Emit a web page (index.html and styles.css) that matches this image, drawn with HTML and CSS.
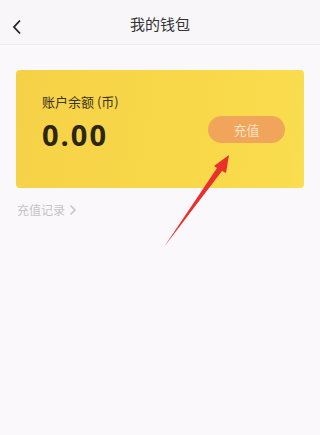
FILE: index.html
```html
<!DOCTYPE html>
<html lang="zh">
<head>
<meta charset="utf-8">
<link rel="stylesheet" href="styles.css">
</head>
<body>
<div class="page">
  <header class="topbar">
    <svg class="back" width="12" height="16" viewBox="0 0 12 16"><path d="M9 1.5 L3 8 L9 14.5" fill="none" stroke="#222" stroke-width="1.8"/></svg>
    <div class="title">我的钱包</div>
  </header>
  <main class="content">
    <section class="card">
      <div class="info">
        <div class="label">账户余额 (币)</div>
        <div class="amount">0.00</div>
      </div>
      <button class="recharge">充值</button>
    </section>
    <div class="records">充值记录 <svg class="chev" width="8" height="12" viewBox="0 0 8 12"><path d="M1.5 1.5 L6 6 L1.5 10.5" fill="none" stroke="#c4c4c4" stroke-width="1.5"/></svg></div>
  </main>
  <svg class="arrow" width="320" height="435" viewBox="0 0 320 435">
    <path d="M164 247 L217 168 L214 166 L229 155 L226 173 L222 171 Z" fill="#e8312c"/>
  </svg>
</div>
</body>
</html>
```
FILE: styles.css
```css
* { box-sizing: border-box; }
html, body { margin: 0; padding: 0; }
body {
  background: #faf8fb;
  font-family: "Noto Sans CJK SC", "Noto Sans", sans-serif;
  width: 320px;
  height: 435px;
  overflow: hidden;
}
.page { position: relative; width: 320px; height: 435px; }
.topbar {
  height: 45px;
  border-bottom: 1px solid #efedf0;
  display: flex;
  align-items: center;
  justify-content: center;
  position: relative;
  background: #f8f6f9;
}
.back { position: absolute; left: 11px; top: 19px; }
.title { font-size: 15px; color: #333; margin-top: 2px; }
.content { padding: 25px 16px 0; }
.card {
  height: 118px;
  border-radius: 4px;
  background: linear-gradient(100deg, #f6d148 0%, #f8d848 60%, #fadd50 100%);
  display: flex;
  align-items: flex-start;
  justify-content: space-between;
  padding: 20px 19px 0 26px;
}
.label { font-size: 13px; color: #3a3320; line-height: 24px; }
.amount {
  font-family: "Open Sans", "Noto Sans", sans-serif;
  font-weight: 700;
  font-size: 29px;
  letter-spacing: 2px;
  line-height: 36px;
  color: #2b2616;
  margin-top: 3px;
}
.recharge {
  margin-top: 26px;
  width: 77px;
  height: 27px;
  border: none;
  border-radius: 14px;
  background: #f0a55b;
  color: #fbe3c4;
  font-family: "Noto Sans CJK SC", sans-serif;
  font-size: 13px;
  padding: 0;
}
.records {
  margin-top: 13px;
  padding-left: 1px;
  font-size: 12px;
  color: #c4c4c4;
  display: flex;
  align-items: center;
  gap: 4px;
}
.arrow { position: absolute; left: 0; top: 0; pointer-events: none; }
```
